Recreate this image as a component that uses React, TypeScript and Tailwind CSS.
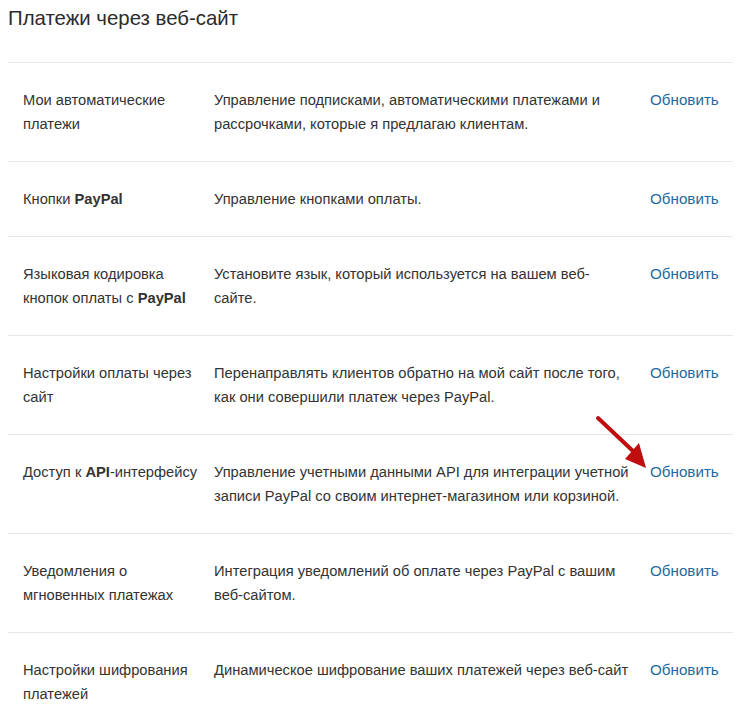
import React from 'react';

type Row = {
  label: React.ReactNode;
  desc: React.ReactNode;
};

const rows: Row[] = [
  {
    label: (
      <>
        Мои автоматические
        <br />
        платежи
      </>
    ),
    desc: (
      <>
        Управление подписками, автоматическими платежами и
        <br />
        рассрочками, которые я предлагаю клиентам.
      </>
    ),
  },
  {
    label: (
      <>
        Кнопки <b className="font-bold">PayPal</b>
      </>
    ),
    desc: 'Управление кнопками оплаты.',
  },
  {
    label: (
      <>
        Языковая кодировка
        <br />
        кнопок оплаты с <b className="font-bold">PayPal</b>
      </>
    ),
    desc: (
      <>
        Установите язык, который используется на вашем веб-
        <br />
        сайте.
      </>
    ),
  },
  {
    label: (
      <>
        Настройки оплаты через
        <br />
        сайт
      </>
    ),
    desc: (
      <>
        Перенаправлять клиентов обратно на мой сайт после того,
        <br />
        как они совершили платеж через PayPal.
      </>
    ),
  },
  {
    label: (
      <>
        Доступ к <b className="font-bold">API</b>-интерфейсу
      </>
    ),
    desc: (
      <>
        Управление учетными данными API для интеграции учетной
        <br />
        записи PayPal со своим интернет-магазином или корзиной.
      </>
    ),
  },
  {
    label: (
      <>
        Уведомления о
        <br />
        мгновенных платежах
      </>
    ),
    desc: (
      <>
        Интеграция уведомлений об оплате через PayPal с вашим
        <br />
        веб-сайтом.
      </>
    ),
  },
  {
    label: (
      <>
        Настройки шифрования
        <br />
        платежей
      </>
    ),
    desc: 'Динамическое шифрование ваших платежей через веб-сайт',
  },
];

export default function App() {
  return (
    <div
      className="relative min-h-[717px] w-[740px] bg-white px-2 pt-[4px] text-[#333333]"
      style={{ fontFamily: '"Liberation Sans", Arial, sans-serif' }}
    >
      <h1 className="text-[20.4px] leading-[28px] font-normal text-[#2b2b2b]">Платежи через веб-сайт</h1>

      <div className="mt-[30px] w-[725px]">
        {rows.map((row, idx) => (
          <div
            key={idx}
            className="grid grid-cols-[206px_436px_1fr] border-t border-[#e8e8e8] py-[25px] text-[14.7px] leading-[24px]"
          >
            <div className="whitespace-nowrap pl-[15px] pr-[10px]">{row.label}</div>
            <div className="whitespace-nowrap pr-[8px]">{row.desc}</div>
            <div>
              <a href="#" className="text-[15.2px] text-[#1e6aa0]">
                Обновить
              </a>
            </div>
          </div>
        ))}
      </div>

      {/* Red arrow pointing at the API row */}
      <svg
        className="pointer-events-none absolute left-[594px] top-[414px]"
        width="56"
        height="58"
        viewBox="0 0 56 58"
      >
        <line x1="4" y1="4" x2="40" y2="38" stroke="#c00d0d" strokeWidth="4" strokeLinecap="round" />
        <polygon points="52,54 31,45 45,29" fill="#c00d0d" />
      </svg>
    </div>
  );
}
